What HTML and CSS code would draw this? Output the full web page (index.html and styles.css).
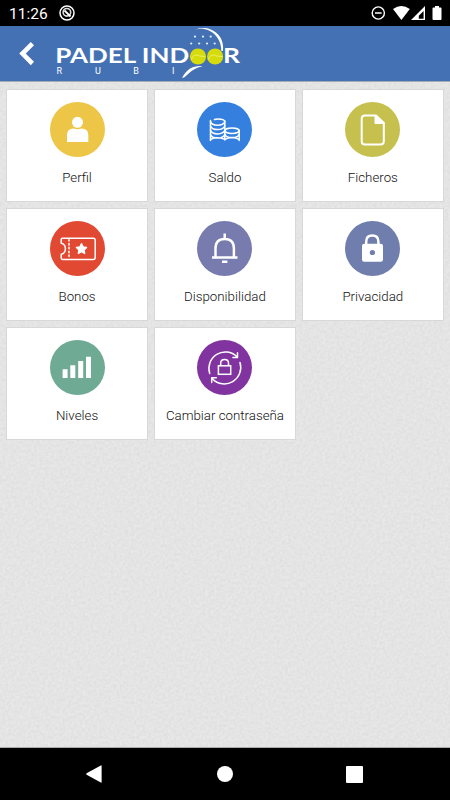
FILE: index.html
```html
<!DOCTYPE html>
<html lang="es">
<head>
  <meta charset="UTF-8">
  <meta name="viewport" content="width=device-width, initial-scale=1">
  <title>Padel Indoor Rubi</title>
  <link rel="stylesheet" href="styles.css">
</head>
<body>

  <div class="status-bar">
    <span class="time">11:26</span>
    <svg class="status-app" width="16" height="16" viewBox="0 0 16 16">
      <circle cx="8" cy="8" r="7" fill="none" stroke="#fff" stroke-width="1.5"/>
      <circle cx="7.9" cy="7.3" r="3.8" fill="none" stroke="#ddd" stroke-width="1.6"/>
      <path d="M5.5 5.5l6 6" stroke="#fff" stroke-width="1.8"/>
    </svg>
    <svg class="status-icons" width="72" height="16" viewBox="371 5 72 16">
      <circle cx="378.3" cy="13" r="6.1" fill="none" stroke="#fff" stroke-width="1.4"/>
      <path d="M375 13h6.6" stroke="#fff" stroke-width="1.5"/>
      <path d="M393 9.1Q401.4 2.7 409.8 9.1L401.4 20z" fill="#fff"/>
      <path fill-rule="evenodd" d="M425 6v14h-14zM423.6 11l-4.8 4.8v2.9h4.8z" fill="#fff"/>
      <path d="M435 6h4v1.6h1.6q.9 0 .9 .9v10.6q0 .9-.9 .9h-7.2q-.9 0-.9-.9v-10.6q0-.9 .9-.9h1.6z" fill="#fff"/>
    </svg>
  </div>

  <header class="header">
    <svg class="back" width="16" height="24" viewBox="19 42 16 24">
      <path d="M32.4 43.7l-9.9 9.9 9.9 9.9" fill="none" stroke="#fff" stroke-width="4.6"/>
    </svg>
    <svg class="logo" width="188" height="54" viewBox="54 27 188 54">
      <text class="logo-name" x="55.2" y="63.4" textLength="134" lengthAdjust="spacingAndGlyphs">PADEL IND</text>
      <text class="logo-name" x="223" y="63.4" textLength="17" lengthAdjust="spacingAndGlyphs">R</text>
      <text class="logo-city" x="56.5 95 133.3 172.1" y="74">RUBI</text>
      <path d="M195.5 29.4C210 26 221.5 37 221.3 51L222.8 51C225.5 35 210 24 195.5 29.4z" fill="#fff"/>
      <path d="M182 78C187 69 193 65.5 202.5 66.2C194 68 190 72 184.5 77.3z" fill="#fff"/>
      <g fill="#e6efff">
        <circle cx="195" cy="36.6" r="1.1"/>
        <circle cx="203" cy="36.6" r="1.1"/>
        <circle cx="210.7" cy="36.6" r="1.1"/>
        <circle cx="191.2" cy="43.5" r="1.1"/>
        <circle cx="199.2" cy="43.5" r="1.1"/>
        <circle cx="207" cy="43.5" r="1.1"/>
        <circle cx="214.7" cy="43.5" r="1.1"/>
      </g>
      <circle cx="198" cy="56.5" r="8.1" fill="#d6dc0c"/>
      <circle cx="215.1" cy="56.5" r="8.1" fill="#d6dc0c"/>
      <path d="M191.5 59.5c1-4.5 5-5.5 8-3.5t5.5.5M208.6 59.5c1-4.5 5-5.5 8-3.5t5.5.5" fill="none" stroke="#eef08a" stroke-width=".8"/>
    </svg>
  </header>

  <main class="content">
    <!-- paper texture -->
    <svg class="texture" width="100%" height="100%">
      <filter id="paper" x="0" y="0" width="100%" height="100%">
        <feTurbulence type="fractalNoise" baseFrequency="0.35" numOctaves="3"/>
        <feColorMatrix values="0 0 0 0 0  0 0 0 0 0  0 0 0 0 0  .07 0 0 0 -.018"/>
      </filter>
      <rect width="100%" height="100%" filter="url(#paper)"/>
    </svg>

    <div class="menu">
      <div class="card">
        <div class="icon yellow">
          <svg viewBox="0 0 55 55" fill="#fff">
            <circle cx="27.5" cy="20.3" r="5.5"/>
            <path d="M17 40v-7q0-6.5 6.5-6.5q4 1.6 8 0q6.8 0 6.8 6.5v7z"/>
          </svg>
        </div>
        <span>Perfil</span>
      </div>
      <div class="card">
        <div class="icon blue">
          <svg class="line" viewBox="0 0 55 55" stroke-width="1.5">
            <path d="M13.5 18.5v20M27.8 19v19M42.2 28v10.5"/>
            <path d="M13.5 19.5q1 3.7 7 3.7t7.3-3.4q0-2.8-6.8-2.8q-2 0-3.5.5M13.5 24q1 3.6 7 3.6t7.3-3.6M13.5 28.3q1 3.6 7 3.6t7.3-3.6M13.5 32.5q1 3.6 7 3.6t7.3-3.6M13.5 37.3q4-1.5 7-1.5t7.3 1.5"/>
            <ellipse cx="35" cy="28.7" rx="7" ry="2.7"/>
            <path d="M28 32.5q1 3.3 7 3.3t7-3.3M28 37.3q3-1.8 7-1.8t7 1.8"/>
          </svg>
        </div>
        <span>Saldo</span>
      </div>
      <div class="card">
        <div class="icon olive">
          <svg class="line" viewBox="0 0 55 55" stroke-width="2">
            <path d="M31 13.5H20q-3.3 0-3.3 3.3v22.5q0 3.3 3.3 3.3h15.5q3.3 0 3.3-3.3V21z"/>
            <path d="M30.5 14v7h8z" fill="#fff"/>
          </svg>
        </div>
        <span>Ficheros</span>
      </div>
      <div class="card">
        <div class="icon red">
          <svg class="line" viewBox="0 0 55 55" stroke-width="1.5">
            <path d="M12.5 17.2h30.7q2 0 2 2v17.2q0 2-2 2H12.5q-1.3 0-1.3-1.3v-3.8q4.2-1 4.2-5.5t-4.2-5.5v-3.8q0-1.3 1.3-1.3z"/>
            <path d="M19 18.5v19" stroke-dasharray="1.5 2.4"/>
            <path d="M31.5 22.7l1.5 3.2 3.5.5-2.5 2.5.6 3.5-3.1-1.7-3.1 1.7.6-3.5-2.5-2.5 3.5-.5z" fill="#fff"/>
          </svg>
        </div>
        <span>Bonos</span>
      </div>
      <div class="card">
        <div class="icon violet">
          <svg class="line" viewBox="0 0 55 55" stroke-width="2.5">
            <path d="M18.5 36v-8.5q0-9.5 9.2-9.5t9.2 9.5v8.5"/>
            <path d="M15 36.4h25.5M27.7 12.5v5M25 40.8h5.4" stroke-linecap="butt"/>
          </svg>
        </div>
        <span>Disponibilidad</span>
      </div>
      <div class="card">
        <div class="icon indigo">
          <svg viewBox="0 0 55 55">
            <rect x="17" y="22.7" width="21" height="18" rx="2.2" fill="#fff"/>
            <path d="M21.2 24v-3.2q0-6.2 6.1-6.2t6.1 6.2v3.2" fill="none" stroke="#fff" stroke-width="2.5"/>
            <circle cx="27.4" cy="31.5" r="2.6" fill="#6f7eac"/>
          </svg>
        </div>
        <span>Privacidad</span>
      </div>
      <div class="card">
        <div class="icon green">
          <svg viewBox="0 0 55 55" fill="#fff">
            <path d="M12.6 29.3h5v8.7h-5zM20.3 25.3h5v12.7h-5zM28.2 21h5v17h-5zM36 16.7h5v21.3h-5z"/>
          </svg>
        </div>
        <span>Niveles</span>
      </div>
      <div class="card">
        <div class="icon purple">
          <svg class="line" viewBox="0 0 55 55" stroke-width="1.5">
            <path d="M12.7 33.5A16.5 16.5 0 0 1 40 16.7M40.5 12.8v4.6h-4.6"/>
            <path d="M43 22.5A16.5 16.5 0 0 1 15.5 39M14.7 42.5v-4.7h4.6"/>
            <rect x="21.4" y="25.8" width="12.3" height="8.5" stroke-linejoin="miter"/>
            <path d="M23.7 25v-2q0-3.5 3.9-3.5t3.9 3.5v2"/>
          </svg>
        </div>
        <span>Cambiar contraseña</span>
      </div>
    </div>
  </main>

  <nav class="nav-bar">
    <svg width="18" height="18" viewBox="0 0 18 18" fill="#fff">
      <path d="M1.6 8.3L15.8.4q.8-.3.8.6v16q0 .9-.8.6L1.6 9.7q-1-.7 0-1.4z"/>
    </svg>
    <div class="nav-home"></div>
    <div class="nav-recent"></div>
  </nav>

</body>
</html>
```
FILE: styles.css
```css
* {
  box-sizing: border-box;
}

body {
  margin: 0;
  height: 800px;
  display: flex;
  flex-direction: column;
  background: #000;
  font-family: Roboto, sans-serif;
  overflow: hidden;
}

svg {
  display: block;
}

.status-bar {
  height: 26px;
  display: flex;
  align-items: center;
  padding: 0 7px 0 9px;
  color: #fff;
}

.time {
  width: 50px;
  font-size: 15.5px;
  line-height: 26px;
  padding-top: 1px;
}

.status-icons {
  margin-left: auto;
}

.header {
  height: 56px;
  display: flex;
  align-items: center;
  padding-left: 19px;
  background: #4471b3;
  border-bottom: 1px solid #a3abb5;
}

.logo {
  margin-left: 19px;
}

.logo-name {
  font-family: Lato, sans-serif;
  font-size: 20.5px;
  font-weight: 700;
  fill: #fff;
}

.logo-city {
  font-family: Roboto, sans-serif;
  font-size: 9px;
  fill: #fff;
}

.content {
  position: relative;
  flex: 1;
  background: #e8e8e8;
  border-bottom: 1px solid #aaa;
}

.texture {
  position: absolute;
  top: 0;
  left: 0;
}

.menu {
  position: relative;
  display: grid;
  grid-template-columns: repeat(3, 141.5px);
  grid-auto-rows: 113px;
  gap: 6px 6.4px;
  padding: 7px 6.3px;
}

.card {
  display: flex;
  flex-direction: column;
  align-items: center;
  padding-top: 12px;
  background: #fff;
  border: 1px solid #d8d8d8;
}

.card span {
  margin-top: 12px;
  font-size: 13.3px;
  font-weight: 300;
  line-height: 18px;
  color: #111;
  white-space: nowrap;
}

.icon {
  width: 55px;
  height: 55px;
  border-radius: 50%;
}

.icon .line {
  fill: none;
  stroke: #fff;
  stroke-linecap: round;
  stroke-linejoin: round;
}

.yellow { background: #eec647; }
.blue { background: #3580df; }
.olive { background: #c6c04f; }
.red { background: #e14932; }
.violet { background: #777bad; }
.indigo { background: #6f7eac; }
.green { background: #6faa95; }
.purple { background: #81349f; }

.nav-bar {
  height: 52px;
  display: flex;
  align-items: center;
  justify-content: space-between;
  padding: 0 87px 0 85px;
}

.nav-home {
  width: 16px;
  height: 16px;
  border-radius: 50%;
  background: #fff;
}

.nav-recent {
  width: 17px;
  height: 17px;
  border-radius: 1px;
  background: #fff;
}
```
